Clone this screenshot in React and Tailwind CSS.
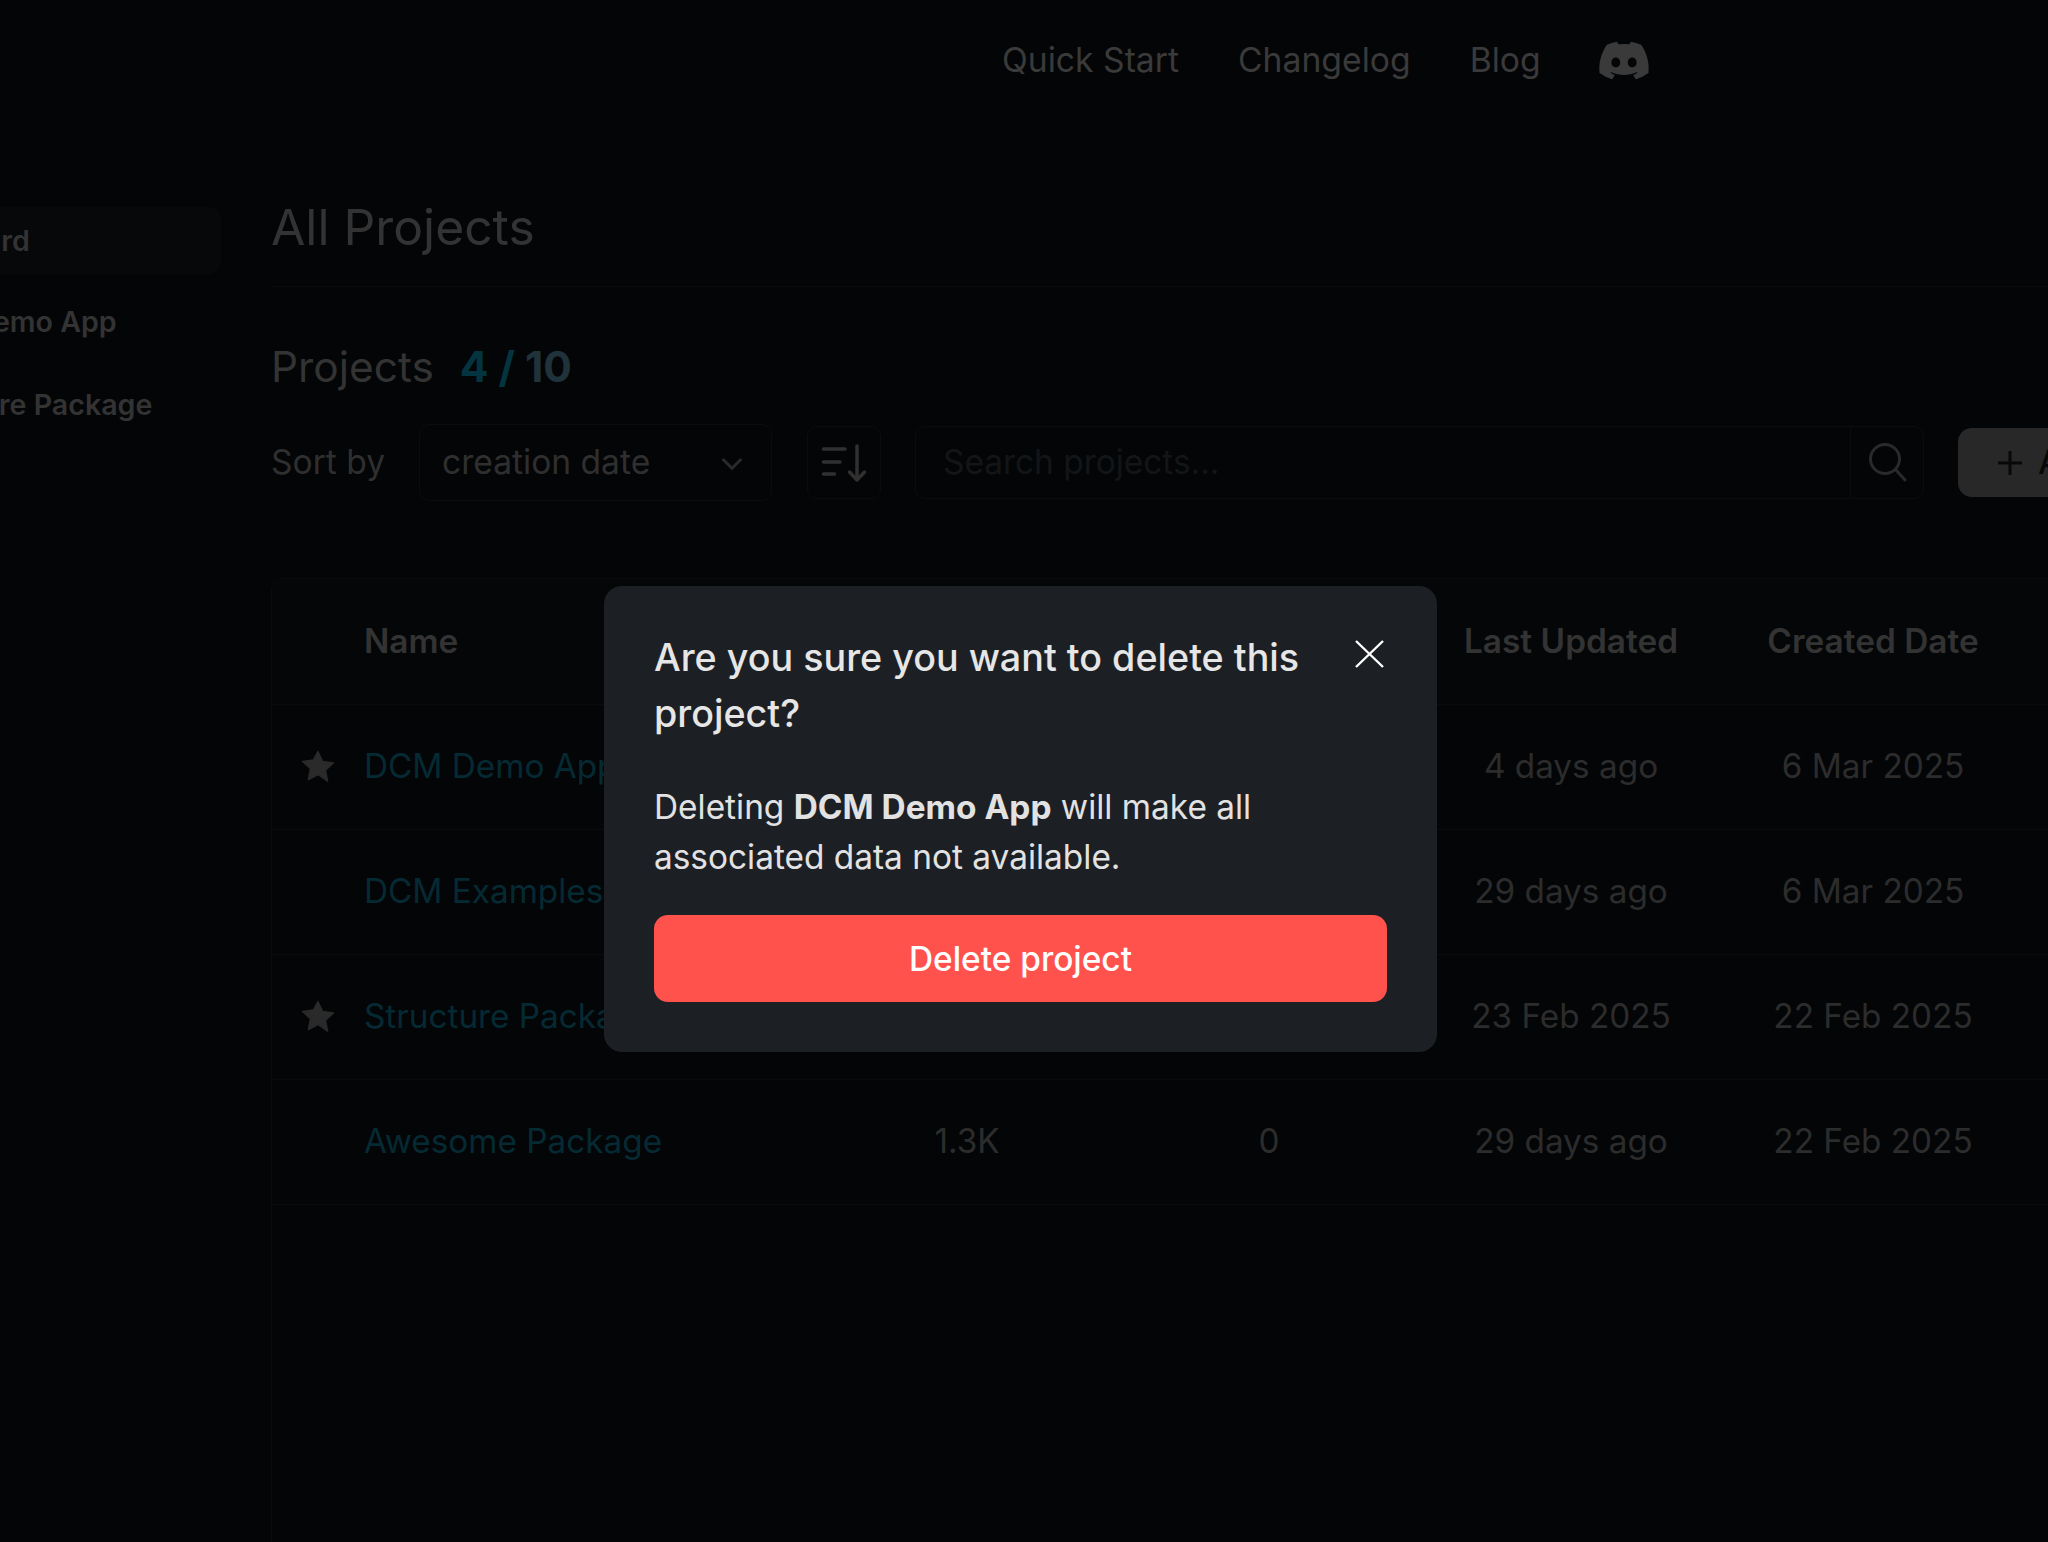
import React from "react";
import { FaDiscord } from "react-icons/fa6";

const rows = [
  { star: true, name: "DCM Demo App", updated: "4 days ago", created: "6 Mar 2025" },
  { star: false, name: "DCM Examples", updated: "29 days ago", created: "6 Mar 2025" },
  { star: true, name: "Structure Package", updated: "23 Feb 2025", created: "22 Feb 2025" },
  { star: false, name: "Awesome Package", a: "1.3K", b: "0", updated: "29 days ago", created: "22 Feb 2025" },
];

function Star() {
  return (
    <svg viewBox="0 0 24 24" className="w-[36px] h-[36px]" fill="#2a2a2a">
      <path d="M12 1.8l3.1 6.6 7.1.9-5.2 4.9 1.4 7.2L12 17l-6.4 3.4L7 13.2 1.8 8.3l7.1-.9z" stroke="#2a2a2a" strokeWidth="1" strokeLinejoin="round" />
    </svg>
  );
}

export default function App() {
  return (
    <div className="relative w-[2048px] h-[1542px] overflow-hidden bg-[#040507] font-['Inter',sans-serif]">
      <header className="h-[120px] flex items-center pl-[1002px] gap-[59px] text-[33.7px] text-[#3a3a3a] whitespace-nowrap">
        <span>Quick Start</span>
        <span>Changelog</span>
        <span>Blog</span>
        <FaDiscord className="w-[54px] h-[43px] -ml-[3px] text-[#3a3a3a]" />
      </header>
      <div className="flex">
        <aside className="w-[346px] -ml-[125px] pt-[87px] shrink-0 text-[28.6px] font-semibold text-[#333333] whitespace-nowrap">
          <div className="h-[67px] w-[346px] rounded-[12px] bg-[#07080a] flex items-center pl-[4px] pt-[2px]">Dashboard</div>
          <div className="h-[83px] mt-[6px] flex items-center pl-[22px] pt-[1px]">DCM Demo App</div>
          <div className="h-[83px] flex items-center pl-[22px] pt-[2px]">Structure Package</div>
        </aside>
        <main className="ml-[50px] w-[1900px] shrink-0">
          <div className="h-[167px] border-b border-[#0a0b0d] flex items-center">
            <h1 className="text-[49.8px] text-[#333333] mt-[47px] leading-[72px]">All Projects</h1>
          </div>
          <div className="mt-[50px] h-[60px] flex items-center gap-[26px] text-[42.4px] leading-[60px]">
            <span className="text-[#333333]">Projects</span>
            <span className="font-bold text-[#04343f]">4 / <span className="text-[#20323a]">10</span></span>
          </div>
          <div className="mt-[27px] flex items-center h-[77px] text-[#2f2f2f]">
            <span className="text-[33.6px] w-[148px] shrink-0">Sort by</span>
            <div className="w-[353px] h-[77px] shrink-0 rounded-[10px] border border-[#0b0c0e] flex items-center justify-between pl-[22px] pr-[23px]">
              <span className="text-[33.6px]">creation date</span>
              <svg viewBox="0 0 24 24" className="w-[32px] h-[32px]" fill="none" stroke="#2a2a2a" strokeWidth="2.2"><path d="M5 9l7 7 7-7" /></svg>
            </div>
            <button className="ml-[35px] w-[74px] h-[73px] shrink-0 rounded-[10px] border border-[#0b0c0e] flex items-center justify-center">
              <svg viewBox="0 0 48 48" className="w-[48px] h-[48px]" fill="none" stroke="#303030" strokeWidth="3.5" strokeLinecap="round" strokeLinejoin="round">
                <path d="M3.5 10H25M3.5 23H20M3.5 35H14.5M37 7V41M29.5 33L37 41L44.5 33" />
              </svg>
            </button>
            <div className="ml-[34px] w-[1009px] h-[73px] shrink-0 rounded-[10px] border border-[#0b0c0e] flex items-center">
              <span className="flex-1 pl-[27px] text-[33.4px] text-[#131517]">Search projects...</span>
              <div className="w-[73px] h-full border-l border-[#0b0c0e] flex items-center justify-center">
                <svg viewBox="0 0 48 48" className="w-[48px] h-[48px]" fill="none" stroke="#2a2a2a" strokeWidth="3" strokeLinecap="round"><circle cx="22" cy="20" r="14.5" /><path d="M33 31L42 41" /></svg>
              </div>
            </div>
            <button className="ml-[34px] w-[300px] h-[69px] shrink-0 rounded-[14px] bg-[#282828] flex items-center pl-[40px] gap-[16px] text-[33.6px] font-medium text-[#080808] whitespace-nowrap">
              <svg viewBox="0 0 24 24" className="w-[24px] h-[24px]" fill="none" stroke="#080808" strokeWidth="3"><path d="M12 0v24M0 12h24" /></svg>
              Add project
            </button>
          </div>
          <div className="mt-[77px] h-[964px] w-[1900px] rounded-tl-[12px] border-l border-t border-[#0a0b0d]">
            <div className="h-[126px] border-b border-[#0a0b0d] bg-[#050608] grid grid-cols-[92px_452px_302px_302px_302px_302px] items-center text-[33.4px] font-semibold text-[#333333]">
              <span />
              <span>Name</span>
              <span />
              <span />
              <span className="text-center">Last Updated</span>
              <span className="text-center">Created Date</span>
            </div>
            {rows.map((r) => (
              <div key={r.name} className="h-[125px] pb-[1px] border-b border-[#0a0b0d] grid grid-cols-[92px_452px_302px_302px_302px_302px] items-center text-[33.3px] text-[#2c2c2c]">
                <span className="flex justify-center">{r.star && <Star />}</span>
                <span className="text-[#052a33] whitespace-nowrap">{r.name}</span>
                <span className="text-center">{r.a}</span>
                <span className="text-center">{r.b}</span>
                <span className="text-center">{r.updated}</span>
                <span className="text-center">{r.created}</span>
              </div>
            ))}
          </div>
        </main>
      </div>

      <div className="absolute left-[604px] top-[586px] w-[833px] h-[466px] rounded-[18px] bg-[#1c1f24] px-[50px] pt-[43px] pb-[50px]">
        <div className="flex justify-between items-start">
          <h2 className="text-[37.7px] leading-[56px] font-medium text-[#e6e6e6] w-[680px]">Are you sure you want to delete this project?</h2>
          <svg viewBox="0 0 29 28" className="w-[29px] h-[28px] mt-[11px] mr-[3px]" fill="none" stroke="#ffffff" strokeWidth="2.4"><path d="M1 1l27 26M28 1L1 27" /></svg>
        </div>
        <p className="mt-[41px] text-[33.4px] leading-[50px] text-[#e2e2e2]">
          Deleting <b className="font-bold">DCM Demo App</b> will make all associated data not available.
        </p>
        <button className="mt-[33px] w-[733px] h-[87px] pt-[1px] rounded-[14px] bg-[#ff524d] text-[#ffffff] text-[33.4px] font-medium">Delete project</button>
      </div>
    </div>
  );
}
